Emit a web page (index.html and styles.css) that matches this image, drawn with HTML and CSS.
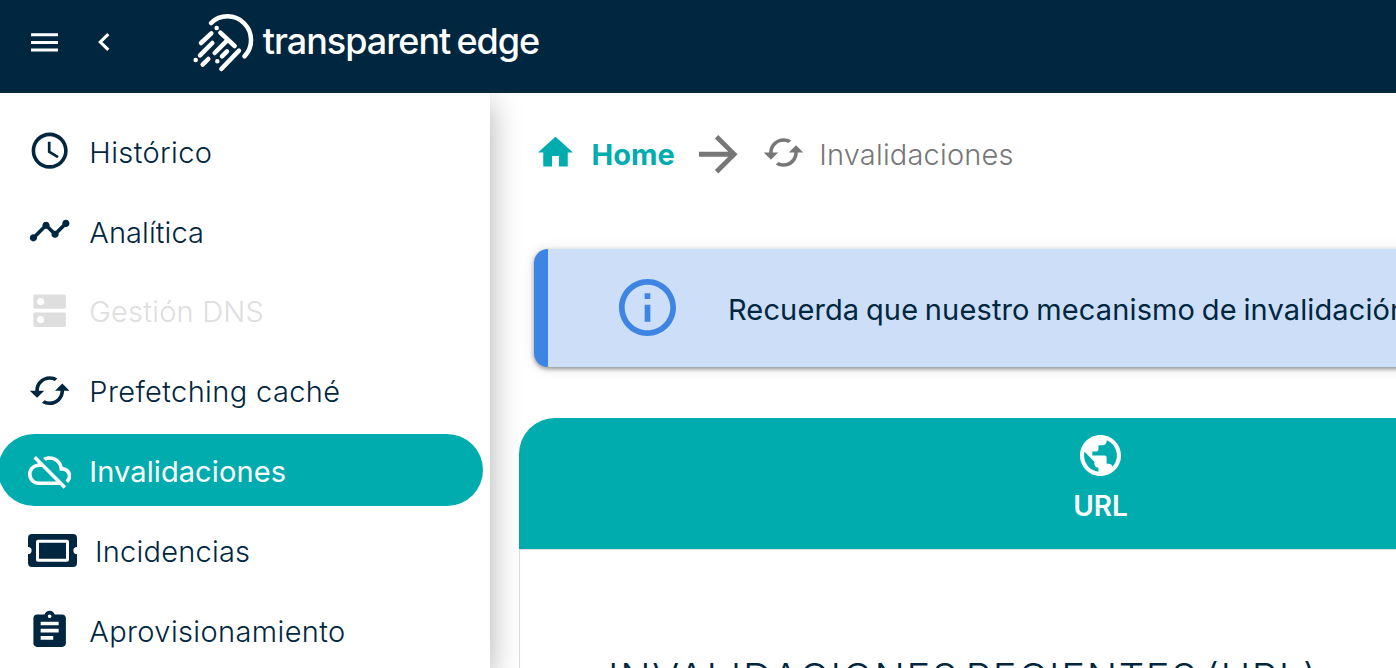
FILE: index.html
```
<!DOCTYPE html>
<html lang="es">
<head>
<meta charset="utf-8">
<title>Invalidaciones</title>
<link rel="stylesheet" href="styles.css">
</head>
<body>
<header class="topbar">
  <svg class="menu" viewBox="0 0 27 19"><path d="M0 1.8h27M0 9.5h27M0 17h27"/></svg>
  <svg class="back" viewBox="0 0 12 18"><path d="M10.3 1.2 2.3 9l8 7.8"/></svg>
  <div class="brand">
    <svg class="mark" viewBox="36 38 190 182">
      <path d="M93 71A70.900 70.900 0 0 1 193.500 171"/>
      <path d="M110 86h.1M47 182h.1M112 186h.1M94 102 63 131M97 131 60 168M85 179 68 196M121 100 164 140M144 121 104 161M141 156 126 171M177 154 124 209"/>
    </svg>
    <span class="brand-name">transparent edge</span>
  </div>
</header>
<div class="body">
  <nav class="sidebar">
    <a class="item"><svg class="icon" viewBox="0 0 24 24"><path d="M11.99 2C6.47 2 2 6.48 2 12s4.47 10 9.99 10C17.52 22 22 17.52 22 12S17.52 2 11.99 2zM12 20c-4.42 0-8-3.58-8-8s3.58-8 8-8 8 3.58 8 8-3.58 8-8 8zm.5-13H11v6l5.25 3.15.75-1.23-4.500-2.67z"/></svg><span class="wide">Histórico</span></a>
    <a class="item"><svg class="icon" viewBox="0 0 24 24"><path d="M23 8c0 1.100-.9 2-2 2-.18 0-.35-.02-.51-.07l-3.560 3.550c.05.16.07.34.07.52 0 1.100-.9 2-2 2s-2-.9-2-2c0-.18.02-.36.07-.52l-2.550-2.550c-.16.05-.34.07-.52.07s-.36-.02-.52-.07l-4.550 4.560c.05.16.07.33.07.51 0 1.100-.9 2-2 2s-2-.9-2-2 .9-2 2-2c.18 0 .35.02.51.07l4.560-4.550C8.020 9.360 8 9.180 8 9c0-1.100.9-2 2-2s2 .9 2 2c0 .18-.02.36-.07.52l2.550 2.550c.16-.05.34-.07.52-.07s.36.02.52.07l3.550-3.560C19.020 8.350 19 8.180 19 8c0-1.100.9-2 2-2s2 .9 2 2z"/></svg><span class="snug low">Analítica</span></a>
    <a class="item disabled"><svg class="icon" viewBox="0 0 24 24"><path d="M20 13H4c-.55 0-1 .45-1 1v6c0 .55.45 1 1 1h16c.55 0 1-.45 1-1v-6c0-.55-.45-1-1-1zM7 19c-1.100 0-2-.9-2-2s.9-2 2-2 2 .9 2 2-.9 2-2 2zM20 3H4c-.55 0-1 .45-1 1v6c0 .55.45 1 1 1h16c.55 0 1-.45 1-1V4c0-.55-.45-1-1-1zM7 9c-1.100 0-2-.9-2-2s.9-2 2-2 2 .9 2 2-.9 2-2 2z"/></svg><span>Gestión DNS</span></a>
    <a class="item"><svg class="icon" viewBox="0 0 24 24"><path d="m19 8-4 4h3c0 3.310-2.690 6-6 6-1.010 0-1.970-.25-2.800-.7l-1.460 1.460C8.970 19.540 10.430 20 12 20c4.420 0 8-3.580 8-8h3l-4-4zM6 12c0-3.310 2.690-6 6-6 1.010 0 1.970.25 2.800.7l1.460-1.460C15.030 4.460 13.570 4 12 4c-4.420 0-8 3.580-8 8H1l4 4 4-4H6z"/></svg><span class="wide">Prefetching caché</span></a>
    <a class="item active"><svg class="icon" viewBox="0 0 24 24"><path d="M24 15c0-2.640-2.050-4.780-4.650-4.960C18.670 6.590 15.640 4 12 4c-1.330 0-2.570.36-3.650.97l1.490 1.490C10.510 6.170 11.230 6 12 6c3.040 0 5.500 2.460 5.500 5.500v.5H19c1.660 0 3 1.340 3 3 0 .99-.48 1.850-1.210 2.400l1.410 1.410c1.090-.92 1.800-2.270 1.800-3.810zM4.410 3.860 3 5.270l2.770 2.770h-.42C2.340 8.360 0 10.910 0 14c0 3.310 2.690 6 6 6h11.730l2 2 1.410-1.410L4.410 3.860zM6 18c-2.210 0-4-1.790-4-4s1.790-4 4-4h1.730l8 8H6z"/></svg><span class="snug">Invalidaciones</span></a>
    <a class="item"><svg class="icon ticket" viewBox="0 0 49 33"><path fill-rule="evenodd" d="M4 0h41a4 4 0 0 1 4 4v9a3.600 3.600 0 0 0 0 7.200V29a4 4 0 0 1-4 4H4a4 4 0 0 1-4-4v-8.800A3.600 3.600 0 0 0 0 13V4a4 4 0 0 1 4-4zM10 5.700a2 2 0 0 0-2 2v18a2 2 0 0 0 2 2h29a2 2 0 0 0 2-2v-18a2 2 0 0 0-2-2zM11 8.700h27v16H11z"/></svg><span>Incidencias</span></a>
    <a class="item"><svg class="icon" viewBox="0 0 24 24"><path d="M19 3h-4.180C14.400 1.840 13.300 1 12 1c-1.300 0-2.400.84-2.820 2H5c-1.100 0-2 .9-2 2v14c0 1.100.9 2 2 2h14c1.100 0 2-.9 2-2V5c0-1.100-.9-2-2-2zm-7 0c.55 0 1 .45 1 1s-.45 1-1 1-1-.45-1-1 .45-1 1-1zm2 14H7v-2h7v2zm3-4H7v-2h10v2zm0-4H7V7h10v2z"/></svg><span class="wide">Aprovisionamiento</span></a>
  </nav>
  <main class="content">
    <div class="crumbs">
      <svg class="home" viewBox="2 3 20 17"><path d="M10 20v-6h4v6h5v-8h3L12 3 2 12h3v8z"/></svg>
      <strong class="crumb-home">Home</strong>
      <svg class="arrow" viewBox="4 4 16 16"><path d="m12 4-1.410 1.410L16.170 11H4v2h12.170l-5.580 5.590L12 20l8-8z"/></svg>
      <svg class="cycle" viewBox="0 0 24 24"><path d="m19 8-4 4h3c0 3.310-2.690 6-6 6-1.010 0-1.970-.25-2.800-.7l-1.460 1.460C8.970 19.540 10.430 20 12 20c4.420 0 8-3.580 8-8h3l-4-4zM6 12c0-3.310 2.690-6 6-6 1.010 0 1.970.25 2.800.7l1.460-1.460C15.030 4.460 13.570 4 12 4c-4.420 0-8 3.580-8 8H1l4 4 4-4H6z"/></svg>
      <span class="crumb-current">Invalidaciones</span>
    </div>
    <div class="notice">
      <svg class="info" viewBox="2 2 20 20"><path d="M11 7h2v2h-2zm0 4h2v6h-2zm1-9C6.480 2 2 6.480 2 12s4.480 10 10 10 10-4.480 10-10S17.520 2 12 2zm0 18c-4.410 0-8-3.590-8-8s3.590-8 8-8 8 3.590 8 8-3.590 8-8 8z"/></svg>
      <span class="notice-text">Recuerda que nuestro mecanismo de invalidación</span>
    </div>
    <section class="panel">
      <div class="tab">
        <svg class="globe" viewBox="2 2 20 20"><path d="M12 2C6.480 2 2 6.480 2 12s4.480 10 10 10 10-4.480 10-10S17.520 2 12 2zm-1 17.930c-3.950-.49-7-3.850-7-7.930 0-.62.08-1.210.21-1.790L9 15v1c0 1.100.9 2 2 2v1.930zm6.900-2.540c-.26-.81-1-1.390-1.900-1.390h-1v-3c0-.55-.45-1-1-1H8v-2h2c.55 0 1-.45 1-1V7h2c1.100 0 2-.9 2-2v-.41c2.930 1.190 5 4.060 5 7.410 0 2.080-.8 3.970-2.100 5.390z"/></svg>
        <span class="tab-label">URL</span>
      </div>
      <div class="panel-body"><h2 class="heading">INVALIDACIONES RECIENTES (URL)</h2></div>
    </section>
  </main>
</div>
</body>
</html>
```
FILE: styles.css
```
* { box-sizing: border-box; }
body {
  margin: 0;
  height: 668px;
  overflow: hidden;
  background: #fff;
  color: #002640;
  font-family: Inter, "Open Sans", sans-serif;
  font-size: 29px;
  font-weight: 300;
  display: flex;
  flex-direction: column;
}
svg { display: block; flex: none; fill: currentColor; }
span, strong, h2 { white-space: nowrap; }

.topbar {
  position: relative;
  z-index: 2;
  flex: none;
  height: 93px;
  background: #002640;
  color: #fff;
  display: flex;
  align-items: flex-start;
  padding-left: 30.5px;
}
.menu { width: 27px; height: 19px; margin-top: 33px; fill: none; stroke: #fff; stroke-width: 2.9; }
.back { width: 12px; height: 18px; margin: 33px 0 0 40.5px; fill: none; stroke: #fff; stroke-width: 3.1; }
.brand { display: flex; margin-left: 82px; }
.mark { width: 63.3px; height: 60.7px; margin-top: 12.4px; fill: none; stroke: #fff; stroke-width: 13.5; stroke-linecap: round; }
.brand-name { margin: 20px 0 0 7.5px; font-size: 36px; line-height: 42px; font-weight: 500; letter-spacing: -1.03px; word-spacing: -2.5px; }

.body { flex: 1; min-height: 0; display: flex; }
.sidebar {
  position: relative;
  z-index: 1;
  flex: none;
  width: 490px;
  height: 575px;
  overflow: clip;
  overflow-clip-margin: 40px;
  background: #fff;
  padding-top: 22px;
  box-shadow: 0 10px 30px rgba(0, 0, 0, 0.32);
}
.item {
  display: flex;
  align-items: center;
  height: 72px;
  width: 485px;
  margin: 0 0 7.8px -2px;
  padding-left: 30px;
  border-radius: 36px;
}
.item span { line-height: 36px; padding-top: 3px; margin-left: 18px; letter-spacing: 0.22px; }
.item .wide { letter-spacing: 0.38px; }
.item .snug { letter-spacing: 0.1px; }
.item .low { padding-top: 4px; }
.icon { width: 43.3px; height: 43.3px; }
.ticket { width: 49px; height: 33px; }
.disabled { color: #dedede; }
.active { margin-bottom: 8.6px; background: #00acad; color: #fff; font-weight: 400; }

.content { flex: 1; min-width: 0; padding: 39px 0 0 29px; }
.crumbs { display: flex; align-items: flex-start; height: 117px; padding-left: 19px; color: #777; }
.home { width: 35px; height: 31px; margin-top: 4px; color: #00acad; }
.crumb-home { margin: 5px 0 0 18.5px; line-height: 36px; font-weight: 700; color: #00acad; }
.arrow { width: 38.5px; height: 38.5px; margin: 3px 0 0 24.500px; }
.cycle { width: 43px; height: 43px; margin: -1px 0 0 24px; }
.crumb-current { margin: 5px 0 0 14.5px; line-height: 36px; letter-spacing: 0.18px; }

.notice {
  display: flex;
  align-items: center;
  height: 118px;
  width: 1200px;
  margin-left: 15px;
  padding-left: 71px;
  background: #cddff8;
  border-left: 14px solid #3d84e3;
  border-radius: 14px;
  box-shadow: 0 2px 4px rgba(0, 0, 0, 0.38), 0 1px 14px rgba(0, 0, 0, 0.12);
}
.info { width: 57px; height: 57px; color: #3d84e3; margin-bottom: 2px; }
.notice-text { margin-left: 52px; padding-top: 3px; font-weight: 400; letter-spacing: 0.13px; word-spacing: -1.6px; }

.panel { margin-top: 51px; width: 1163px; }
.tab {
  height: 131px;
  display: flex;
  flex-direction: column;
  align-items: center;
  padding-top: 17px;
  background: #00acad;
  color: #fff;
  border-radius: 36px 36px 0 0;
}
.globe { width: 41px; height: 41px; }
.tab-label { margin-top: 13px; font-size: 28px; line-height: 34px; font-weight: 600; }
.panel-body { height: 200px; border: 1px solid #dcdcdc; padding: 106px 0 0 88px; }
.heading { margin: 0; font-size: 40px; line-height: 44px; font-weight: 300; letter-spacing: 1.65px; word-spacing: -6px; }
```
